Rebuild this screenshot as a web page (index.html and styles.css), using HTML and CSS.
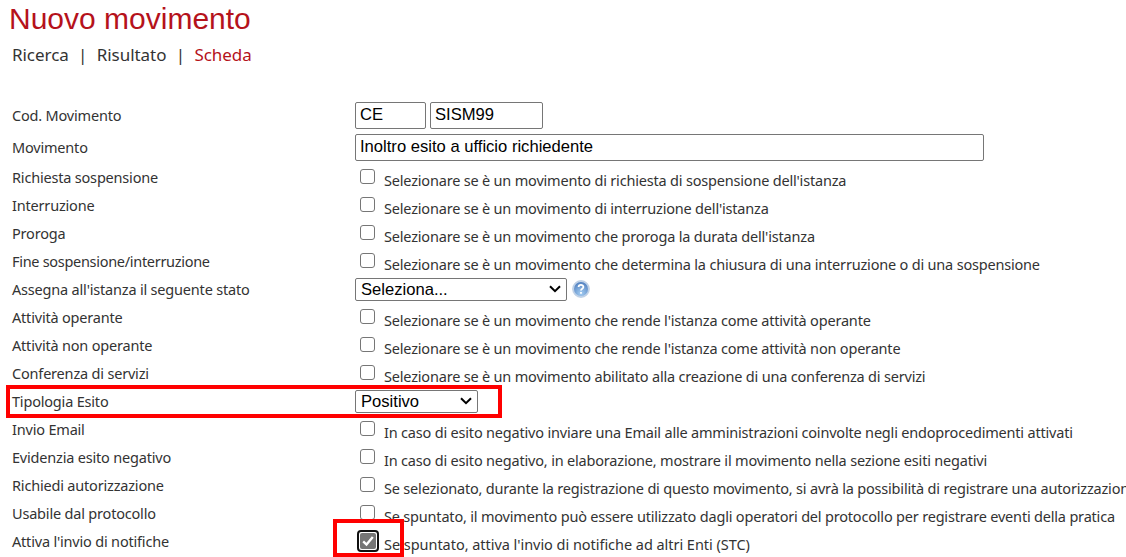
FILE: index.html
```html
<!DOCTYPE html>
<html lang="it">
<head>
<meta charset="utf-8">
<title>Nuovo movimento</title>
<link rel="stylesheet" href="styles.css">
</head>
<body>
<h1 class="title">Nuovo movimento</h1>
<nav class="tabs"><span class="t1">Ricerca</span><span class="sep">|</span><span class="t2">Risultato</span><span class="sep">|</span><span class="t3 current">Scheda</span></nav>
<form class="form">
  <div class="row tall"><label class="name">Cod. Movimento</label><input class="field code" value="CE"><input class="field sub" value="SISM99"></div>
  <div class="row tall"><label class="name">Movimento</label><input class="field wide" value="Inoltro esito a ufficio richiedente"></div>
  <div class="row"><label class="name">Richiesta sospensione</label><input type="checkbox" class="check"><span class="hint">Selezionare se è un movimento di richiesta di sospensione dell'istanza</span></div>
  <div class="row"><label class="name">Interruzione</label><input type="checkbox" class="check"><span class="hint">Selezionare se è un movimento di interruzione dell'istanza</span></div>
  <div class="row"><label class="name">Proroga</label><input type="checkbox" class="check"><span class="hint">Selezionare se è un movimento che proroga la durata dell'istanza</span></div>
  <div class="row"><label class="name tight">Fine sospensione/interruzione</label><input type="checkbox" class="check"><span class="hint">Selezionare se è un movimento che determina la chiusura di una interruzione o di una sospensione</span></div>
  <div class="row"><label class="name">Assegna all'istanza il seguente stato</label>
    <div class="select state"><span>Seleziona...</span><svg class="chevron" viewBox="0 0 12 8"><path d="M1 1.2 6 6.2 11 1.2"/></svg></div>
    <svg class="help" viewBox="0 0 18 18"><defs><radialGradient id="ball" cx=".5" cy=".8" r=".75"><stop offset="0" stop-color="#a4cdf2"/><stop offset="1" stop-color="#5584c2"/></radialGradient></defs><circle cx="9" cy="9" r="8.4" fill="#c3d4e9" stroke="#b4c9e2" stroke-width=".8"/><circle cx="9" cy="9" r="7" fill="url(#ball)"/><path d="M6.6 7.1C6.6 4.2 11.4 4.2 11.4 7 11.4 8.8 9 8.7 9 10.6M9 12.1v1.7" fill="none" stroke="#fff" stroke-width="1.8"/></svg>
  </div>
  <div class="row"><label class="name">Attività operante</label><input type="checkbox" class="check"><span class="hint">Selezionare se è un movimento che rende l'istanza come attività operante</span></div>
  <div class="row"><label class="name">Attività non operante</label><input type="checkbox" class="check"><span class="hint">Selezionare se è un movimento che rende l'istanza come attività non operante</span></div>
  <div class="row"><label class="name">Conferenza di servizi</label><input type="checkbox" class="check"><span class="hint">Selezionare se è un movimento abilitato alla creazione di una conferenza di servizi</span></div>
  <div class="row outcome"><label class="name">Tipologia Esito</label>
    <div class="select result"><span>Positivo</span><svg class="chevron" viewBox="0 0 12 8"><path d="M1 1.2 6 6.2 11 1.2"/></svg></div>
  </div>
  <div class="row"><label class="name">Invio Email</label><input type="checkbox" class="check"><span class="hint">In caso di esito negativo inviare una Email alle amministrazioni coinvolte negli endoprocedimenti attivati</span></div>
  <div class="row"><label class="name">Evidenzia esito negativo</label><input type="checkbox" class="check"><span class="hint">In caso di esito negativo, in elaborazione, mostrare il movimento nella sezione esiti negativi</span></div>
  <div class="row"><label class="name">Richiedi autorizzazione</label><input type="checkbox" class="check"><span class="hint">Se selezionato, durante la registrazione di questo movimento, si avrà la possibilità di registrare una autorizzazione</span></div>
  <div class="row"><label class="name">Usabile dal protocollo</label><input type="checkbox" class="check"><span class="hint">Se spuntato, il movimento può essere utilizzato dagli operatori del protocollo per registrare eventi della pratica</span></div>
  <div class="row notify"><label class="name">Attiva l'invio di notifiche</label><span class="ticked"><svg viewBox="0 0 15 15"><path d="M3 7.8 6.1 10.8 12 3.8"/></svg></span><span class="hint">Se spuntato, attiva l'invio di notifiche ad altri Enti (STC)</span></div>
</form>
</body>
</html>
```
FILE: styles.css
```css
*, *::after { box-sizing: border-box; }
body { margin: 0; height: 557px; overflow: hidden; background: #fff; color: #333; font-family: "Noto Sans", sans-serif; }
.title { margin: 0; padding: 3px 0 0 9px; height: 40px; font: 400 30px/32px "Liberation Sans", sans-serif; color: #b5121b; white-space: nowrap; }
.tabs { display: flex; height: 59px; padding: 3px 0 0 12px; font-size: 17px; line-height: 24px; letter-spacing: -0.05px; white-space: nowrap; }
.sep { width: 28px; text-align: center; }
.current { color: #b5121b; }
.form { display: flex; flex-direction: column; width: 1126px; height: 458px; overflow: hidden; }
.row { display: flex; align-items: center; height: 28px; padding-left: 12px; flex: none; position: relative; font-size: 14.5px; letter-spacing: -0.19px; white-space: nowrap; }
.row.tall { height: 32px; padding-top: 1px; }
.row.tall + .row:not(.tall) { margin-top: 1px; }
.name { width: 343px; flex: none; line-height: 20px; padding-bottom: 2px; }
.tight { letter-spacing: -0.3px; }
.field { height: 27px; margin: 0 4px 0 0; padding: 0 4px 2px; border: 1px solid #767676; border-radius: 2px; background: #fff; color: #000; font: 16.6px "Liberation Sans", sans-serif; }
.code { width: 71px; }
.sub { width: 113px; }
.wide { width: 629px; }
.check { appearance: none; width: 15px; height: 15px; margin: 0 9px 3px 5px; border: 1px solid #767676; border-radius: 3px; background: #fff; flex: none; }
.hint { line-height: 20px; padding-top: 4px; }
.select { display: flex; align-items: center; justify-content: space-between; height: 23px; margin-bottom: 2px; padding: 0 5px; border: 1px solid #767676; border-radius: 2px; color: #000; font: 16.6px/21px "Liberation Sans", sans-serif; letter-spacing: 0; }
.state { width: 212px; }
.result { width: 123px; }
.chevron { width: 12px; height: 8px; fill: none; stroke: #000; stroke-width: 2; }
.help { width: 18px; height: 18px; margin: 0 0 2px 5px; }
.outcome::after, .notify::after { content: ""; position: absolute; border: 4px solid #f00; }
.outcome::after { left: 6px; top: -3px; width: 496px; height: 33px; z-index: 1; }
.notify::after { left: 333px; top: -9px; width: 71px; height: 38px; }
.notify .hint { letter-spacing: -0.04px; }
.ticked { display: flex; width: 22px; height: 22px; margin: 0 5px 2px 2px; padding: 1px; border: 2px solid #101010; border-radius: 4px; flex: none; }
.ticked svg { width: 16px; height: 16px; background: #767676; border-radius: 2px; fill: none; stroke: #fff; stroke-width: 2.2; }
```
